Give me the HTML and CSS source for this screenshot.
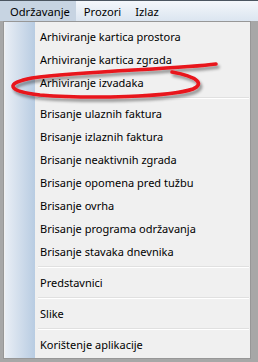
FILE: index.html
```html
<!DOCTYPE html>
<html lang="hr">
<head>
  <meta charset="UTF-8">
  <title>Održavanje</title>
  <link rel="stylesheet" href="styles.css">
</head>
<body>
  <div class="menu-bar">
    <span class="bar-item active">Održavanje</span>
    <span class="bar-item">Prozori</span>
    <span class="bar-item">Izlaz</span>
  </div>
  <div class="drop-menu">
    <div class="menu-item">Arhiviranje kartica prostora</div>
    <div class="menu-item">Arhiviranje kartica zgrada</div>
    <div class="menu-item">Arhiviranje izvadaka</div>
    <div class="menu-sep"></div>
    <div class="menu-item">Brisanje ulaznih faktura</div>
    <div class="menu-item">Brisanje izlaznih faktura</div>
    <div class="menu-item">Brisanje neaktivnih zgrada</div>
    <div class="menu-item">Brisanje opomena pred tužbu</div>
    <div class="menu-item">Brisanje ovrha</div>
    <div class="menu-item">Brisanje programa održavanja</div>
    <div class="menu-item">Brisanje stavaka dnevnika</div>
    <div class="menu-sep"></div>
    <div class="menu-item">Predstavnici</div>
    <div class="menu-sep"></div>
    <div class="menu-item">Slike</div>
    <div class="menu-sep"></div>
    <div class="menu-item">Korištenje aplikacije</div>
  </div>
  <!-- hand drawn red ring round the highlighted entry -->
  <svg class="mark" width="258" height="60" viewBox="0 0 258 60">
    <defs>
      <filter id="shade" x="-10%" y="-40%" width="120%" height="180%">
        <feGaussianBlur in="SourceAlpha" stdDeviation="1.5"/>
        <feOffset dx="2" dy="3" result="blur"/>
        <feComponentTransfer><feFuncA type="linear" slope="0.4"/></feComponentTransfer>
        <feMerge><feMergeNode/><feMergeNode in="SourceGraphic"/></feMerge>
      </filter>
    </defs>
    <path filter="url(#shade)" fill="none" stroke="#e8141b" stroke-width="3.6" stroke-linecap="round"
      d="M216 6 C180 11 82 13 32 20 C5 25 6 33 40 37 C90 41 170 39 193 31 C204 26 199 19 172 14"/>
  </svg>
</body>
</html>
```
FILE: styles.css
```css
html, body {
  margin: 0;
  width: 258px;
  height: 362px;
  overflow: hidden;
  background: #a7a7a7;
  font-family: 'Noto Sans', 'Open Sans', Arial, sans-serif;
  font-size: 11px;
  color: #000;
  position: relative;
}
.menu-bar {
  display: flex;
  height: 20px;
  border-top: 1px solid #4b5560;
  background: linear-gradient(to bottom, #f4f7fb, #dbe5f0);
  font-size: 11.2px;
}
.bar-item {
  padding: 2px 6px 0 8px;
  line-height: 18px;
}
.bar-item.active {
  background: #c7d4e2;
  padding-left: 10px;
}
.drop-menu {
  margin-left: 3px;
  width: 245px;
  height: 333px;
  border: 1px solid #979797;
  padding: 3px 0 0 1px;
  box-sizing: content-box;
  background:
    linear-gradient(to right, #e9eef5, #b8cce2) no-repeat 1px 0 / 30px 100%,
    #f0f0f0;
}
.menu-item {
  height: 23px;
  line-height: 23px;
  padding-left: 35px;
  white-space: nowrap;
}
.menu-sep {
  height: 8px;
  margin-left: 33px;
  margin-right: 1px;
  background: linear-gradient(to bottom, transparent 3px, #e0e0e0 3px, #e0e0e0 4px, #ffffff 4px, #ffffff 5px, transparent 5px);
}
.mark {
  position: absolute;
  left: 0;
  top: 58px;
}
```
